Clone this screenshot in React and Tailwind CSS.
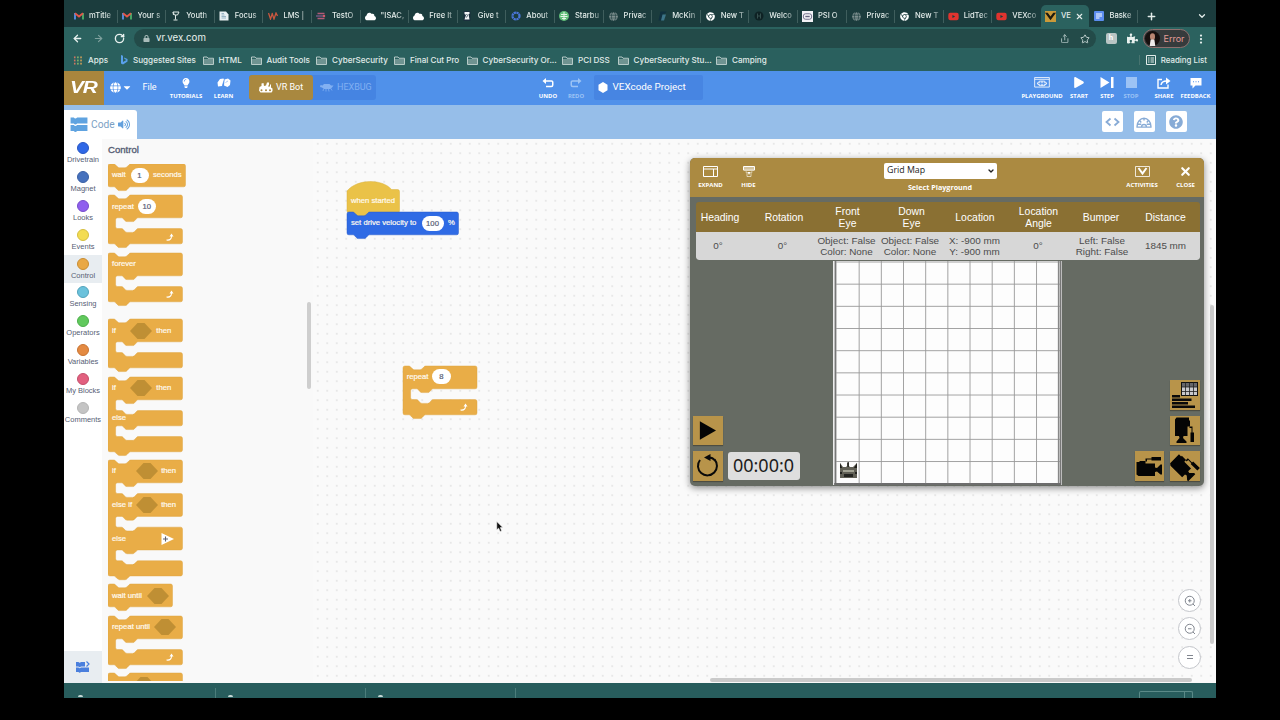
import React from "react";
import {
  FaGlobe, FaCaretDown, FaLightbulb, FaLock, FaPuzzlePiece, FaPlay,
  FaYoutube, FaChrome, FaVolumeUp, FaQuestionCircle, FaCloud,
} from "react-icons/fa";
import { ArrowLeft, ArrowRight, RotateCw, Share, Star, Plus, ChevronDown, X, MoreVertical } from "lucide-react";

/* ---------- browser chrome ---------- */

const Gmail = () => (
  <svg viewBox="0 0 20 16" className="h-2 w-2.5">
    <path d="M2 15V2" stroke="#5a8fe8" strokeWidth="3.6" fill="none" />
    <path d="M18 15V2" stroke="#4fae6a" strokeWidth="3.6" fill="none" />
    <path d="M2 2.5l8 6.5 8-6.5" stroke="#e2564a" strokeWidth="3.8" fill="none" />
  </svg>
);
const Trophy = () => (
  <svg viewBox="0 0 20 20" className="h-2.5 w-2.5" fill="none" stroke="#dfe8e6" strokeWidth="2">
    <path d="M4 2h12l-3 6H7zM9 8v9M5 18h8M4 2l1 6" />
  </svg>
);
const Sheet = () => (
  <svg viewBox="0 0 20 20" className="h-2.5 w-2.5">
    <path d="M1 1h13l5 6v12H1z" fill="#e9eff2" />
    <path d="M5 5h5M5 8h6M5 11h9M5 14h9" stroke="#7ea0b4" strokeWidth="1.5" />
  </svg>
);
const Canvas = () => (
  <svg viewBox="0 0 20 16" className="h-2 w-2.5" fill="none" stroke="#c9573f" strokeWidth="2.6">
    <path d="M1 2l4 12 4-12M8 2l4 12 4-12 3 6" />
  </svg>
);
const Bars = () => (
  <svg viewBox="0 0 20 16" className="h-2 w-2.5" strokeWidth="2.6">
    <path d="M3 3h14M3 13h14" stroke="#b05a78" />
    <path d="M0 8h14" stroke="#7d5a8f" />
    <circle cx="16" cy="8" r="2.5" fill="#d05a6a" />
  </svg>
);
const Knight = () => (
  <svg viewBox="0 0 20 20" className="h-2.5 w-2.5">
    <rect x="3" y="0" width="14" height="20" fill="#1b2f3d" />
    <path d="M5 2h10v4h-2l2 11H5l3-9-3-2z" fill="#f3f5f6" />
    <path d="M9 6l2 3-2 4" stroke="#1b2f3d" strokeWidth="1.500" fill="none" />
  </svg>
);
const Ring = () => (
  <svg viewBox="0 0 20 20" className="h-2.5 w-2.5">
    <circle cx="10" cy="10" r="7" fill="none" stroke="#4a76d8" strokeWidth="4.5" strokeDasharray="4.5 1" />
  </svg>
);
const Siren = () => (
  <svg viewBox="0 0 20 20" className="h-2.5 w-2.5">
    <circle cx="10" cy="10" r="10" fill="#62c07a" />
    <path d="M4 7h12M3 11h14M6 15h8M10 2v16" stroke="#e4f5e8" strokeWidth="2" />
  </svg>
);
const World = () => <FaGlobe className="h-[9px] w-[9px] text-[#7d8f8f]" />;
const Mck = () => (
  <svg viewBox="0 0 20 20" className="h-2.5 w-2.5">
    <path d="M7 1h12l-3 4h-3l-4 14H3z" fill="#10303f" />
    <path d="M11 7h7l-4 12H8z" fill="#3d7488" />
  </svg>
);
const Dark = () => (
  <svg viewBox="0 0 20 20" className="h-2.5 w-2.5">
    <circle cx="10" cy="10" r="9" fill="#0e2224" />
    <path d="M7 5v10M13 5v10M7 10h6" stroke="#36504f" strokeWidth="2" />
  </svg>
);
const Psi = () => (
  <svg viewBox="0 0 20 20" className="h-[11px] w-[11px]">
    <rect width="20" height="20" fill="#f2f2f6" />
    <rect x="2.500" y="5" width="15" height="10" rx="4" fill="none" stroke="#65637f" strokeWidth="1.600" />
    <path d="M6 10h8" stroke="#65637f" strokeWidth="2.500" />
  </svg>
);
const Chrome = () => <FaChrome className="h-[9px] w-[9px] text-white" />;
const Tube = () => <FaYoutube className="h-[11px] w-[11px] text-[#e0342f]" />;
const Vex = () => (
  <svg viewBox="0 0 20 20" className="h-[11px] w-[11px]">
    <rect width="20" height="20" fill="#c99a3a" />
    <path d="M0 3h5l5 7 5-7h5L10 17z" fill="#1d1a10" />
  </svg>
);
const Doc = () => (
  <svg viewBox="0 0 20 20" className="h-2.5 w-2.5">
    <rect width="20" height="20" rx="2" fill="#5b8df0" />
    <path d="M4 6h12M4 10h12M4 14h7" stroke="#fff" strokeWidth="2" />
  </svg>
);
const CloudIc = () => <FaCloud className="h-[9px] w-[11px] text-white" />;

const tabs = [
  [Gmail, "mTitle"], [Gmail, "Your s"], [Trophy, "Youth"], [Sheet, "Focus"], [Canvas, "LMS |"],
  [Bars, "TestO"], [CloudIc, "\"ISAC,"], [CloudIc, "Free It"], [Knight, "Give t"], [Ring, "About"],
  [Siren, "Starbu"], [World, "Privac"], [Mck, "McKin"], [Chrome, "New T"], [Dark, "Welco"],
  [Psi, "PSI O"], [World, "Privac"], [Chrome, "New T"], [Tube, "LidTec"], [Tube, "VEXco"],
  [Vex, "VE", true], [Doc, "Baske"],
];

function TabStrip() {
  return (
    <div className="flex h-[27px] bg-[#1b3c3d] pl-[5px] font-medium text-[#e3ecea]">
      {tabs.map(([Icon, label, active], i) => (
        <div
          key={i}
          className={
            "mt-[5px] flex h-[22px] w-[48.6px] shrink-0 items-center pl-1 " +
            (active ? "rounded-t-[5px] bg-[#2b625f]" : "")
          }
        >
          <span className="flex w-[11px] shrink-0 items-center justify-center"><Icon /></span>
          <span
            className={
              "ml-[5px] shrink-0 whitespace-nowrap text-[7.600px] leading-3 " +
              (active ? "w-[11px]" : "w-[26px] [mask-image:linear-gradient(90deg,#000_60%,rgba(0,0,0,0.25))]")
            }
          >
            {label}
          </span>
          {active && <X className="ml-[3px] h-[9px] w-[9px] shrink-0" strokeWidth={3} />}
          {!active && i !== 19 && <span className="ml-auto h-[13px] w-px bg-[#3f5e5d]" />}
        </div>
      ))}
      <Plus className="mt-[11px] ml-[8px] h-[11px] w-[11px]" strokeWidth={3.2} />
      <ChevronDown className="mt-[11px] mr-[9px] ml-auto h-[10px] w-[10px]" strokeWidth={3} />
    </div>
  );
}

function AddressBar() {
  return (
    <div className="flex h-[23px] items-center bg-[#2b625f] text-[#e8f1ef]">
      <ArrowLeft className="ml-[8px] h-[11px] w-[11px]" strokeWidth={2.8} />
      <ArrowRight className="ml-[10px] h-[11px] w-[11px] text-[#7fa19e]" strokeWidth={2.4} />
      <RotateCw className="ml-[10px] h-[11px] w-[11px]" strokeWidth={3} />
      <div className="ml-[9px] flex h-[19px] w-[962px] items-center rounded-full bg-[#234b49] pr-[6px] pl-[9px]">
        <FaLock className="h-[7px] w-[7px] text-[#a9bcba]" />
        <span className="ml-[6px] text-[9.700px]">vr.vex.com</span>
        <Share className="ml-auto h-[9.500px] w-[9.500px] text-[#b5c8c6]" strokeWidth={2.2} />
        <Star className="ml-[10.500px] h-[10px] w-[10px] text-[#c9d8d6]" strokeWidth={2.2} />
      </div>
      <span className="ml-[9.500px] flex h-[11px] w-[11px] items-center justify-center rounded-[2px] bg-[#b9c5c4] text-[7px] font-bold text-white">h</span>
      <FaPuzzlePiece className="ml-[10px] h-[11px] w-[11px]" />
      <div className="ml-[5px] flex h-[18.500px] w-[47px] items-center rounded-full border border-[#8f706f] bg-[#363b3c]">
        <svg viewBox="0 0 16 16" className="ml-px h-[15px] w-[15px]">
          <circle cx="8" cy="8" r="8" fill="#16100f" />
          <ellipse cx="8" cy="6" rx="2.700" ry="3.500" fill="#b98672" />
          <path d="M6 9h4l1 7H5z" fill="#eceaea" />
        </svg>
        <span className="ml-[4px] text-[9px] leading-[12px] text-[#e49c98]">Error</span>
      </div>
      <MoreVertical className="ml-[5px] h-[12px] w-[12px]" strokeWidth={2.5} />
    </div>
  );
}

const Folder = () => (
  <svg viewBox="0 0 22 18" className="h-[9px] w-[11px]" fill="none" stroke="#c6d6d4" strokeWidth="1.800">
    <path d="M1 2h7l2 2.500h11V17H1zM1 8h20" />
    <path d="M2 9h18v7H2z" fill="#6f9391" stroke="none" />
  </svg>
);
const AppsIcon = () => (
  <svg viewBox="0 0 20 20" className="h-[9px] w-[10px]">
    {[3, 10, 17].map((y) => (
      <g key={y}>
        <rect x="1" y={y - 2} width="3.500" height="4" fill="#d27462" />
        <rect x="8" y={y - 2} width="3.500" height="4" fill="#83b56b" />
        <rect x="15" y={y - 2} width="3.500" height="4" fill="#cf9f58" />
      </g>
    ))}
  </svg>
);
const Bing = () => (
  <svg viewBox="0 0 14 20" className="h-[10px] w-[8px]">
    <path d="M1 0l4 1.500V14l7-4-4-2-1-3 7 3v5l-9 6-4-2z" fill="#59a1ec" />
  </svg>
);

function Bookmark({ icon, label, w }) {
  return (
    <div className={"flex shrink-0 items-center " + w}>
      {icon}
      <span className="ml-[5px] whitespace-nowrap">{label}</span>
    </div>
  );
}

function Bookmarks() {
  return (
    <div className="flex h-[21px] items-center bg-[#2a605e] pl-[9px] text-[8.100px] font-medium text-[#e1ecea]">
      <Bookmark icon={<AppsIcon />} label="Apps" w="w-[47px]" />
      <Bookmark icon={<Bing />} label="Suggested Sites" w="w-[82.500px]" />
      <Bookmark icon={<Folder />} label="HTML" w="w-[48px]" />
      <Bookmark icon={<Folder />} label="Audit Tools" w="w-[65.500px]" />
      <Bookmark icon={<Folder />} label="CyberSecurity" w="w-[78px]" />
      <Bookmark icon={<Folder />} label="Final Cut Pro" w="w-[72.500px]" />
      <Bookmark icon={<Folder />} label="CyberSecurity Or..." w="w-[95.500px]" />
      <Bookmark icon={<Folder />} label="PCI DSS" w="w-[55.500px]" />
      <Bookmark icon={<Folder />} label="CyberSecurity Stu..." w="w-[98.500px]" />
      <Bookmark icon={<Folder />} label="Camping" w="w-[60px]" />
      <div className="mr-[9px] ml-auto flex items-center">
        <span className="mr-[6px] h-[10px] w-px bg-[#47736f]" />
        <svg viewBox="0 0 20 20" className="h-[10px] w-[10px]" fill="none" stroke="#e1ecea" strokeWidth="2">
          <path d="M1 1h18v18H1zM4 6h3M9 6h7M4 10h3M9 10h7M4 14h3M9 14h7" />
        </svg>
        <span className="ml-[5px] text-[7.900px]">Reading List</span>
      </div>
    </div>
  );
}

/* ---------- VEX toolbar ---------- */

function Tool({ icon, label, w, dim }) {
  return (
    <div className={"flex h-full shrink-0 flex-col items-center pt-[4.500px] " + w + (dim ? " text-[#9cc3f5]" : " text-white")}>
      <span className="flex h-[14px] items-center">{icon}</span>
      <span className="mt-[2px] font-['Open_Sans'] text-[5.900px] leading-[8px] font-bold whitespace-nowrap">{label}</span>
    </div>
  );
}

const Hand = ({ flip }) => (
  <svg viewBox="0 0 24 20" className={"h-[10px] w-[12px]" + (flip ? " -scale-x-100" : "")} fill="none" stroke="currentColor" strokeWidth="3">
    <path d="M5 6h14a2.500 2.500 0 0 1 2.500 2.500V14a3 3 0 0 1-3 3H8" />
    <path d="M8 0L1 6l7 6z" fill="currentColor" stroke="none" />
  </svg>
);
const Cubes = () => (
  <svg viewBox="0 0 28 20" className="h-[10px] w-[14px]" fill="currentColor">
    <path d="M1 9l5-7 7-1 1 3-4 12-8 1zM15 3l7-2 5 4-1 9-5 4-7-3z" />
    <path d="M14 4l-3 11M22 6l-5 3" stroke="#4f91ea" strokeWidth="1" fill="none" />
  </svg>
);
const PlayIcon = () => (
  <svg viewBox="0 0 34 24" className="h-[11px] w-[16px]" fill="none" stroke="currentColor" strokeWidth="1.800">
    <path d="M1 1h32v21H1zM1 5h32" />
    <path d="M6 14l6-5h10l6 5-6 5H12z" fill="currentColor" fillOpacity=".65" />
    <path d="M14 10v8M20 10v8M9 14h16" stroke="#4f91ea" />
  </svg>
);
const ShareArrow = () => (
  <svg viewBox="0 0 28 24" className="h-[12px] w-[14px]" fill="none" stroke="currentColor" strokeWidth="2.800">
    <path d="M10 5H2v17h20v-7" />
    <path d="M8 16c1-6 5-8 11-8" />
    <path d="M18 1l9 7-9 7z" fill="currentColor" stroke="none" />
  </svg>
);
const Bubble = () => (
  <svg viewBox="0 0 24 24" className="h-[12px] w-[12px]">
    <path d="M1 2h22v15H11l-6 6v-6H1z" fill="currentColor" />
    <path d="M6 9.500h2M11 9.500h2M16 9.500h2" stroke="#5091ea" strokeWidth="2.400" />
  </svg>
);
const Rover = () => (
  <svg viewBox="0 0 28 22" className="h-[11px] w-[14px]" fill="currentColor">
    <path d="M1 10l4-2V3l4-1 1 6 4-1 2-6h4v4l-2 4h4V5h2v6l3 2v5l-2 3H3l-3-4z" />
    <path d="M3 16.500a2 2 0 1 0 4 0 2 2 0 1 0-4 0M12 16.500a2 2 0 1 0 4 0 2 2 0 1 0-4 0M20 16.500a2 2 0 1 0 4 0 2 2 0 1 0-4 0" fill="#a9883f" />
  </svg>
);
const Bug = () => (
  <svg viewBox="0 0 28 18" className="h-[9px] w-[14px]" fill="currentColor">
    <path d="M1 4l4 1 3-3h11l3 3h5l-3 4-4 3H8L4 9 0 8z" />
    <path d="M7 12l-1 4M12 12v5M17 12l1 5M21 10l3 5" stroke="currentColor" strokeWidth="1.600" />
  </svg>
);

function Toolbar() {
  return (
    <div className="flex h-[34px] bg-[#5091ea]">
      <div className="flex w-[39.500px] items-center justify-center bg-[#a9863d]">
        <span className="scale-x-[1.3] font-['Liberation_Sans'] text-[16px] font-bold tracking-tighter text-white italic">VR</span>
      </div>
      <FaGlobe className="mt-[11px] ml-[6px] h-[11px] w-[11px] shrink-0 text-white" />
      <FaCaretDown className="mt-[11px] ml-[2px] h-[11px] w-[8px] shrink-0 text-white" />
      <span className="mt-[10px] ml-[12px] w-[24px] font-['Roboto'] text-[9px] leading-[13px] text-white">File</span>
      <Tool icon={<FaLightbulb className="h-[10px] w-[10px]" />} label="TUTORIALS" w="w-[39px]" />
      <Tool icon={<Cubes />} label="LEARN" w="w-[36px]" />
      <div className="mt-[4px] ml-[7.500px] flex h-[25px] rounded-[3px] bg-[#4584e2] font-['Roboto'] text-[9px]">
        <div className="flex w-[64px] items-center rounded-[3px] bg-[#a9883f] pl-[10px] text-white">
          <Rover /><span className="ml-[3px]">VR Bot</span>
        </div>
        <div className="flex w-[63px] items-center pl-[7px] text-[#82b0f2]">
          <Bug /><span className="ml-[3px]">HEXBUG</span>
        </div>
      </div>
      <div className="ml-[158px] flex">
        <Tool icon={<Hand />} label="UNDO" w="w-[28px]" />
        <Tool icon={<Hand flip />} label="REDO" w="w-[28px]" dim />
      </div>
      <div className="mt-[4px] ml-[4px] flex h-[25px] w-[109px] items-center rounded-[2px] bg-[#4785e2] pl-[4px]">
        <svg viewBox="0 0 20 22" className="h-[11px] w-[10px]"><path d="M10 0l9 5.500v11L10 22l-9-5.500v-11z" fill="#fff" /></svg>
        <span className="ml-[4.500px] font-['Roboto'] text-[9.900px] text-white">VEXcode Project</span>
      </div>
      <div className="mr-[10px] ml-auto flex">
        <Tool icon={<PlayIcon />} label="PLAYGROUND" w="w-[44px]" />
        <Tool icon={<FaPlay className="h-[11px] w-[10px]" />} label="START" w="w-[30px]" />
        <Tool icon={<svg viewBox="0 0 28 22" className="h-[11px] w-[14px]" fill="currentColor"><path d="M1 0l18 11L1 22zM22 0h5v22h-5z" /></svg>} label="STEP" w="w-[26px]" />
        <Tool icon={<span className="h-[11px] w-[11px] bg-[#9cc3f5]" />} label="STOP" w="w-[22px]" dim />
        <Tool icon={<ShareArrow />} label="SHARE" w="w-[43px] pl-[1px]" />
        <Tool icon={<Bubble />} label="FEEDBACK" w="w-[21px]" />
      </div>
    </div>
  );
}

function SubBar() {
  const btn = "flex h-[21px] w-[21px] items-center justify-center rounded-[2px] bg-white text-[#87abd6]";
  return (
    <div className="flex h-[34px] bg-[#96bee9]">
      <div className="mt-[5px] flex w-[72.500px] items-center rounded-tr-[3px] bg-white pl-[6px] text-[#62a0dd]">
        <svg viewBox="0 0 36 32" className="h-[15px] w-[18px]" fill="#5fa3e0">
          <path d="M0 1h7q3 4 7 0h22v13H14q-4 4-7 0H0zM0 17h7q3 4 7 0h22v13H14q-4 4-7 0H0z" />
        </svg>
        <span className="ml-[3px] font-['Roboto'] text-[10.200px] text-[#7b9fc4]">Code</span>
        <FaVolumeUp className="ml-[3.500px] h-[11px] w-[12px]" />
      </div>
      <div className="mt-[6px] mr-[29.500px] ml-auto flex gap-[11px]">
        <span className={btn}>
          <svg viewBox="0 0 30 20" className="h-[10px] w-[15px]" fill="none" stroke="currentColor" strokeWidth="3.600"><path d="M11 3L3 10l8 7M19 3l8 7-8 7" /></svg>
        </span>
        <span className={btn}>
          <svg viewBox="0 0 34 26" className="h-[12px] w-[16px]" fill="none" stroke="currentColor" strokeWidth="3">
            <path d="M2 22a15 17 0 0 1 30 0v2H2zM17 4v6M7 9l4 5M27 9l-4 5M3 18h8M23 18h8M12 23c0-6 10-6 10 0" />
          </svg>
        </span>
        <span className={btn}><FaQuestionCircle className="h-[14px] w-[14px]" /></span>
      </div>
    </div>
  );
}

/* ---------- blocks ---------- */

const K = 0.475;
const DOWN = "c2 0 3 1 4 2l4 4c1 1 2 2 4 2h12c2 0 3-1 4-2l4-4c1-1 2-2 4-2";
const BACK = "c-2 0-3 1-4 2l-4 4c-1 1-2 2-4 2h-12c-2 0-3-1-4-2l-4-4c-1-1-2-2-4-2";

/* rows: heights of the solid rows; a C-shaped mouth sits between each pair */
function blockPath(w, rows, hat) {
  const gap = 22.7;
  let d = hat ? `M0 2C22-24 74-24 94-1H${w - 4}a4 4 0 0 1 4 4` : `M0 4a4 4 0 0 1 4-4H12${DOWN}H${w - 4}a4 4 0 0 1 4 4`;
  let y = 0;
  rows.forEach((h, i) => {
    y += h;
    d += `V${y - 4}a4 4 0 0 1-4 4`;
    if (i < rows.length - 1) {
      y += gap;
      d += `H64${BACK}H20a4 4 0 0 0-4 4V${y - 4}a4 4 0 0 0 4 4H28${DOWN}H${w - 4}a4 4 0 0 1 4 4`;
    }
  });
  return d + `H48${BACK}H4a4 4 0 0 1-4-4Z`;
}

function Block({ w, rows, fill = "#e9ad47", stroke = "#dfa541", hat, children }) {
  const total = rows.reduce((a, b) => a + b, 0) + (rows.length - 1) * 22.7;
  return (
    <div className="relative shrink-0" style={{ width: w, height: total * K }}>
      <svg className="absolute inset-0 h-full w-full overflow-visible">
        <path transform={`scale(${K})`} d={blockPath(w / K, rows, hat)} fill={fill} stroke={stroke} strokeWidth="1" />
      </svg>
      <div className="relative flex flex-col gap-[10.800px] text-[#fffaf0] [-webkit-text-stroke:0.2px_#fffaf0]">{children}</div>
    </div>
  );
}

const Row = ({ children }) => <div className="flex h-[22.800px] items-center pl-[4px]">{children}</div>;
const Low = ({ children }) => <div className="flex h-[15.200px] items-center pl-[4px]">{children}</div>;
const T = ({ w, children }) => <span className={"shrink-0 text-[7.700px] leading-[10px] whitespace-nowrap " + (w || "")}>{children}</span>;
const Pill = ({ w = "w-[18.500px]", children }) => (
  <span className={"flex h-[15px] shrink-0 items-center justify-center rounded-full bg-white text-[7.700px] text-[#575e75] [-webkit-text-stroke:0.2px_#575e75] " + w}>{children}</span>
);
const Hex = () => (
  <svg viewBox="0 0 44 32" className="h-[16px] w-[22px] shrink-0"><path d="M15 0h14l15 16-15 16H15L0 16z" fill="#bf8f34" /></svg>
);
const Loop = () => (
  <svg viewBox="0 0 16 16" className="ml-auto mr-[8.500px] h-[8px] w-[8px]"><path d="M1 13c5 1 9-2 9-6H7l4-6 4 6h-3c0 6-5 10-11 8z" fill="#fff" /></svg>
);

function Palette() {
  return (
    <div className="flex h-[544px] w-[211px] flex-col overflow-hidden bg-[#f9f9f9] pl-[6px] font-['Liberation_Sans']">
      <div className="flex h-[25px] shrink-0 items-center pb-[2.500px] text-[9.600px] text-[#575e75] [-webkit-text-stroke:0.35px_#575e75]">Control</div>
      <div className="relative h-[517px] shrink-0 overflow-hidden">
        <div className="flex flex-col">
          <Block w={77.500} rows={[48]}><Row><T w="w-[18.500px]">wait</T><Pill w="w-[18px]">1</Pill><T w="ml-[4.500px]">seconds</T></Row></Block>
          <div className="h-[8.700px] shrink-0" />
          <Block w={74.500} rows={[48, 32]}><Row><T w="w-[25.500px]">repeat</T><Pill>10</Pill></Row><Low><Loop /></Low></Block>
          <div className="h-[8.700px] shrink-0" />
          <Block w={74.500} rows={[48, 32]}><Row><T>forever</T></Row><Low><Loop /></Low></Block>
          <div className="h-[17.500px] shrink-0" />
          <Block w={74.500} rows={[48, 32]}><Row><T w="w-[18.300px]">if</T><Hex /><T w="ml-[4px]">then</T></Row><Low /></Block>
          <div className="h-[8.700px] shrink-0" />
          <Block w={74.500} rows={[48, 32, 32]}><Row><T w="w-[18.300px]">if</T><Hex /><T w="ml-[4px]">then</T></Row><Low><T>else</T></Low><Low /></Block>
          <div className="h-[8.500px] shrink-0" />
          <Block w={74.500} rows={[48, 48, 48, 32]}>
            <Row><T w="w-[23.700px]">if</T><Hex /><T w="ml-[3.500px]">then</T></Row>
            <Row><T w="w-[23.700px]">else if</T><Hex /><T w="ml-[3.500px]">then</T></Row>
            <Row>
              <T w="w-[48.500px]">else</T>
              <svg viewBox="0 0 26 24" className="h-[12px] w-[13px]"><path d="M1 0l25 12L1 24z" fill="#fff" /><path d="M9 7v10M4 12h10" stroke="#5f6270" strokeWidth="2.200" /></svg>
            </Row>
            <Low />
          </Block>
          <div className="h-[8.500px] shrink-0" />
          <Block w={64.500} rows={[48]}><Row><T w="w-[34.500px]">wait until</T><Hex /></Row></Block>
          <div className="h-[8.700px] shrink-0" />
          <Block w={74.500} rows={[48, 32]}><Row><T w="w-[42px]">repeat until</T><Hex /></Row><Low><Loop /></Low></Block>
          <div className="h-[8.700px] shrink-0" />
          <Block w={74.500} rows={[48, 32]}><div className="flex pt-[3.500px] pl-[25px]"><Hex /></div></Block>
        </div>
        <span className="absolute top-[138px] right-[2px] h-[87px] w-[4px] rounded-full bg-[#cecece]" />
      </div>
    </div>
  );
}

const cats = [
  ["Drivetrain", "bg-[#3068e6] border-[#2857c4]"], ["Magnet", "bg-[#4671bd] border-[#3a60a5]"],
  ["Looks", "bg-[#8f5fee] border-[#774dcb]"], ["Events", "bg-[#f3dc51] border-[#d5bf40]"],
  ["Control", "bg-[#e9a845] border-[#c98e34]"], ["Sensing", "bg-[#6bc2dc] border-[#52a3bc]"],
  ["Operators", "bg-[#61c95d] border-[#4caf4a]"], ["Variables", "bg-[#e48a42] border-[#c87433]"],
  ["My Blocks", "bg-[#e2607f] border-[#c44f6c]"], ["Comments", "bg-[#c4c4c4] border-[#b5b5b5]"],
];

function Categories() {
  return (
    <div className="flex w-[38px] flex-col bg-white font-['Liberation_Sans']">
      {cats.map(([name, c]) => (
        <div key={name} className={"flex h-[28.900px] shrink-0 flex-col items-center pt-[3px] " + (name === "Control" ? "bg-[#e8edf1]" : "")}>
          <span className={"h-[12px] w-[12px] shrink-0 rounded-full border " + c} />
          <span className="mt-[1px] text-[7.500px] leading-[9px] whitespace-nowrap text-[#575e75]">{name}</span>
        </div>
      ))}
      <div className="mt-auto flex h-[32px] items-center justify-center bg-[#e8edf1]">
        <svg viewBox="0 0 28 24" className="h-[12px] w-[14px]" fill="#4a7fdd">
          <path d="M0 2h5q2 3 5 0h8v9H10q-3 3-5 0H0zM0 13h5q2 3 5 0h16v9H10q-3 3-5 0H0z" />
          <path d="M21 1l5 5-5 5" fill="none" stroke="#4a7fdd" strokeWidth="2.400" />
        </svg>
      </div>
    </div>
  );
}

/* ---------- playground window ---------- */

const columns = [
  [["Heading"], ["0°"]], [["Rotation"], ["0°"]],
  [["Front", "Eye"], ["Object: False", "Color: None"]],
  [["Down", "Eye"], ["Object: False", "Color: None"]],
  [["Location"], ["X: -900 mm", "Y: -900 mm"]],
  [["Location", "Angle"], ["0°"]],
  [["Bumper"], ["Left: False", "Right: False"]],
  [["Distance"], ["1845 mm"]],
];
const Lines = ({ lines }) => lines.map((l) => <div key={l} className="whitespace-nowrap">{l}</div>);

function WinTool({ icon, label, w }) {
  return (
    <div className={"flex flex-col items-center pt-[6px] text-white " + w}>
      <span className="flex h-[14px] items-center">{icon}</span>
      <span className="mt-[3px] font-['Open_Sans'] text-[6px] leading-[8px] font-bold">{label}</span>
    </div>
  );
}

function Field() {
  const s = 22.17;
  return (
    <svg viewBox="0 0 230 224" className="h-[224px] w-[230px] shrink-0">
      <rect x="0" y="0" width="229" height="224" fill="#ececec" />
      <rect x="2.500" y="-2" width="225" height="225" fill="#fdfdfd" stroke="#777" strokeWidth="1.800" />
      {Array.from({ length: 11 }, (_, i) => (
        <g key={i} stroke="#999" strokeWidth="0.900">
          {i > 0 && i < 10 && <path d={`M${4 + i * s} 0V223`} />}
          {i < 10 && <path d={`M3 ${1 + i * s}H227`} />}
        </g>
      ))}
      <path d="M225.500 0V223" stroke="#888" strokeWidth="1.300" />
      <path d="M1 223H228" stroke="#666" strokeWidth="1.600" />
      <g transform="translate(6 201)">
        <path d="M1 1l3 4h3l1-1V1h2v3l1 1h3l4-4v15H1z" fill="#605f55" />
        <path d="M1 1l2 5H1zM18 1l-3 5h3zM8.500 0h1.300v5H8.500z" fill="#1f1f1b" />
        <path d="M4 8h11v2H4z" fill="#a3a394" />
        <path d="M5 12h9v3H5zM1 10h2v2H1zM16 10h2v2h-2z" fill="#23231f" />
      </g>
    </svg>
  );
}

const Gold = ({ children }) => <span className="flex h-[29.500px] w-[29.500px] items-center justify-center bg-[#b8944a] shadow-[0_1px_1px_#4d4d42]">{children}</span>;
const Cam = ({ turn }) => (
  <svg viewBox="0 0 56 56" className={"h-[28px] w-[28px] " + turn}>
    <path d="M3 20h6v-2h12v5h19v8l4 1 7-7h3v20h-3l-7-6-4 1v8H7l-4-3z" fill="#050505" />
    <path d="M21 13h12v-3h19v7H33v-2H24v4h-3z" fill="#050505" />
  </svg>
);

function Playground() {
  return (
    <div className="absolute top-[19px] left-[377px] flex h-[328px] w-[514px] flex-col overflow-hidden rounded-[5px] bg-[#666b63] shadow-[0_2px_7px_rgba(0,0,0,0.45)]">
      <div className="flex h-[38.500px] shrink-0 bg-[#ab8a41]">
        <WinTool w="w-[41px]" label="EXPAND" icon={<svg viewBox="0 0 30 22" className="h-[11px] w-[15px]" fill="none" stroke="#fff" strokeWidth="2"><path d="M1 1h28v20H1zM1 6h28M21 6v15" /></svg>} />
        <WinTool w="w-[35px]" label="HIDE" icon={<svg viewBox="0 0 24 22" className="h-[11px] w-[12px]" fill="none" stroke="#fff" strokeWidth="2"><path d="M1 1h22v7H1zM1 4h22" /><path d="M1 8h22M5 12h3v9h8v-9h3" strokeWidth="1.200" /><path d="M9 12h6l-3 6z" fill="#fff" stroke="none" /></svg>} />
        <div className="ml-[117px] flex w-[114px] flex-col items-center">
          <div className="mt-[4.500px] flex h-[16px] w-[113px] items-center justify-between rounded-[2px] bg-white pr-[2px] pl-[3.500px] font-['Open_Sans'] text-[8.800px] text-[#222]">
            Grid Map
            <ChevronDown className="h-[8px] w-[8px]" strokeWidth={4} />
          </div>
          <span className="mt-[3px] font-['Open_Sans'] text-[7.200px] leading-[10px] font-bold text-white">Select Playground</span>
        </div>
        <div className="-mr-[2px] ml-auto flex">
          <WinTool w="w-[46px]" label="ACTIVITIES" icon={<svg viewBox="0 0 30 22" className="h-[11px] w-[15px]" fill="none" stroke="#fff"><path d="M1 1h28v20H1z" strokeWidth="1.600" /><path d="M7 4l8 11 8-11" strokeWidth="4" /></svg>} />
          <WinTool w="w-[41px]" label="CLOSE" icon={<X className="h-[13px] w-[13px]" strokeWidth={4} />} />
        </div>
      </div>
      <div className="mt-[5.500px] ml-[5.500px] w-[504px] shrink-0 overflow-hidden rounded-[3px] text-center font-['Liberation_Sans']">
        <div className="grid h-[30px] grid-cols-[49px_79px_48px_80px_47px_80px_45px_76px] bg-[#8a7033] text-[10.400px] leading-[12px] text-white">
          {columns.map(([h]) => <div key={h.join()} className="flex flex-col items-center justify-center pt-[1px] last:pl-[8px]"><Lines lines={h} /></div>)}
        </div>
        <div className="grid h-[28px] grid-cols-[45px_84px_44px_83px_46px_81px_47px_74px] rounded-b-[3px] bg-[#d7d7d7] text-[9.900px] leading-[11px] text-[#4c4c4c]">
          {columns.map(([h, v]) => <div key={h.join()} className="flex flex-col items-center justify-center pb-[1px] last:pl-[6px]"><Lines lines={v} /></div>)}
        </div>
      </div>
      <div className="flex h-[226px] items-start justify-between pt-[1px]">
        <div className="ml-[3px] flex h-[219.500px] w-[139.500px] shrink-0 flex-col justify-end gap-[6px]">
          <Gold><svg viewBox="0 0 20 22" className="h-[21px] w-[17px]"><path d="M1 0l19 11L1 22z" fill="#050505" /></svg></Gold>
          <div className="flex items-center gap-[5px]">
            <Gold>
              <svg viewBox="0 0 46 48" className="h-[24px] w-[23px]" fill="none" stroke="#0a0a0a" strokeWidth="4">
                <path d="M8 12a19 19 0 1 0 29-1" /><path d="M16 7l13-7v14z" fill="#0a0a0a" stroke="none" /><path d="M26 7c5 0 9 2 12 6" />
              </svg>
            </Gold>
            <span className="flex h-[28px] w-[72px] items-center justify-center rounded-[3px] bg-[#dedede] font-['Noto_Sans'] text-[18px] text-[#1c1c1c]">00:00:0</span>
          </div>
        </div>
        <Field />
        <div className="mr-[4.500px] flex h-[219.500px] grow flex-col items-end justify-end gap-[6px]">
          <Gold>
            <svg viewBox="0 0 56 56" className="h-[28px] w-[28px]">
              <rect x="21" y="3" width="32" height="26" fill="#c9c9cc" stroke="#111" strokeWidth="2" />
              <path d="M22 4h30v8H22z" fill="#66666a" />
              <path d="M21 12h32M21 21h32M29 3v26M37 3v26M45 3v26" stroke="#222" strokeWidth="1.600" />
              <path d="M2 28h16v5H2zM2 35h39v5H2zM2 42h32v5H2zM2 49h46v5H2z" fill="#0a0a0a" />
            </svg>
          </Gold>
          <Gold><Cam turn="rotate-90" /></Gold>
          <div className="flex gap-[6px]"><Gold><Cam turn="" /></Gold><Gold><Cam turn="rotate-45" /></Gold></div>
        </div>
      </div>
    </div>
  );
}

/* ---------- workspace ---------- */

function ZoomButton({ children }) {
  return (
    <span className="flex h-[23px] w-[23px] items-center justify-center rounded-full border border-[#c4c6cb] bg-white">
      <svg viewBox="0 0 24 24" className="h-[12px] w-[12px]" fill="none" stroke="#81868f" strokeWidth="2">{children}</svg>
    </span>
  );
}

function Workspace() {
  return (
    <div className="relative h-[544px] grow overflow-hidden bg-[#fafafa] bg-[radial-gradient(circle,#e2e2e2_0.6px,transparent_0.9px)] bg-[size:9.500px_9.500px] font-['Liberation_Sans']">
      <div className="absolute top-[50.700px] left-[34px]">
        <Block w={52.500} rows={[48]} hat fill="#eac248" stroke="#d8b13c"><Row><T>when started</T></Row></Block>
      </div>
      <div className="absolute top-[73px] left-[34px]">
        <Block w={111.500} rows={[48]} fill="#2f6be5" stroke="#2659c8"><Row><T w="w-[70.500px]">set drive velocity to</T><Pill w="w-[22px]">100</Pill><T w="ml-[4.500px]">%</T></Row></Block>
      </div>
      <div className="absolute top-[226.500px] left-[89.700px]">
        <Block w={74} rows={[48, 32]}><Row><T w="w-[25.500px]">repeat</T><Pill>8</Pill></Row><Low><Loop /></Low></Block>
      </div>
      <Playground />
      <div className="absolute top-[450px] left-[865px] flex flex-col gap-[5.300px]">
        <ZoomButton><circle cx="11.500" cy="11.500" r="9" /><path d="M8 11.500h7M11.500 8v7M18 18l4 4" /></ZoomButton>
        <ZoomButton><circle cx="11.500" cy="11.500" r="9" /><path d="M8 11.500h7M18 18l4 4" /></ZoomButton>
        <ZoomButton><path d="M6 9h12M6 15h12" strokeWidth="2.400" /></ZoomButton>
      </div>
      <span className="absolute top-[166px] right-[2px] h-[339px] w-[4px] rounded-full bg-[#cacaca]" />
      <span className="absolute bottom-[1.500px] left-[397px] h-[4px] w-[482px] rounded-full bg-[#cacaca]" />
      <svg viewBox="0 0 12 20" className="absolute top-[382px] left-[183px] h-[11px] w-[7px]"><path d="M1 1v15l3.500-3L7 19l3-1-2.500-6H12z" fill="#111" stroke="#fff" strokeWidth="1" /></svg>
    </div>
  );
}

function BottomBar() {
  const seg = "flex h-full w-[150px] items-end border-r border-[#4b7d7b] pl-[12px]";
  const bit = "mb-px h-[2px] w-[5px] rounded-t-full bg-[#c5d8d6]";
  return (
    <div className="flex h-[15px] items-end overflow-hidden bg-[#285d5d]">
      <div className="flex h-[10px] w-[152px] items-end border-r border-[#4b7d7b] pl-[14px]"><span className={bit} /></div>
      <div className={seg + " max-h-[10px]"}><span className={bit} /></div>
      <div className={seg + " max-h-[10px]"}><span className={bit} /></div>
      <div className="mr-[23px] ml-auto flex h-[7px] w-[54px] rounded-t-[2px] border border-b-0 border-[#5b8a88]"><span className="ml-[44px] w-px bg-[#5b8a88]" /></div>
    </div>
  );
}

export default function App() {
  return (
    <div className="flex h-[720px] w-[1280px] justify-center overflow-hidden bg-black">
      <div className="flex h-[698px] w-[1152px] flex-col overflow-hidden font-['Inter',sans-serif]">
        <TabStrip />
        <AddressBar />
        <Bookmarks />
        <Toolbar />
        <SubBar />
        <div className="flex h-[544px] shrink-0">
          <Categories />
          <Palette />
          <Workspace />
        </div>
        <BottomBar />
      </div>
    </div>
  );
}
